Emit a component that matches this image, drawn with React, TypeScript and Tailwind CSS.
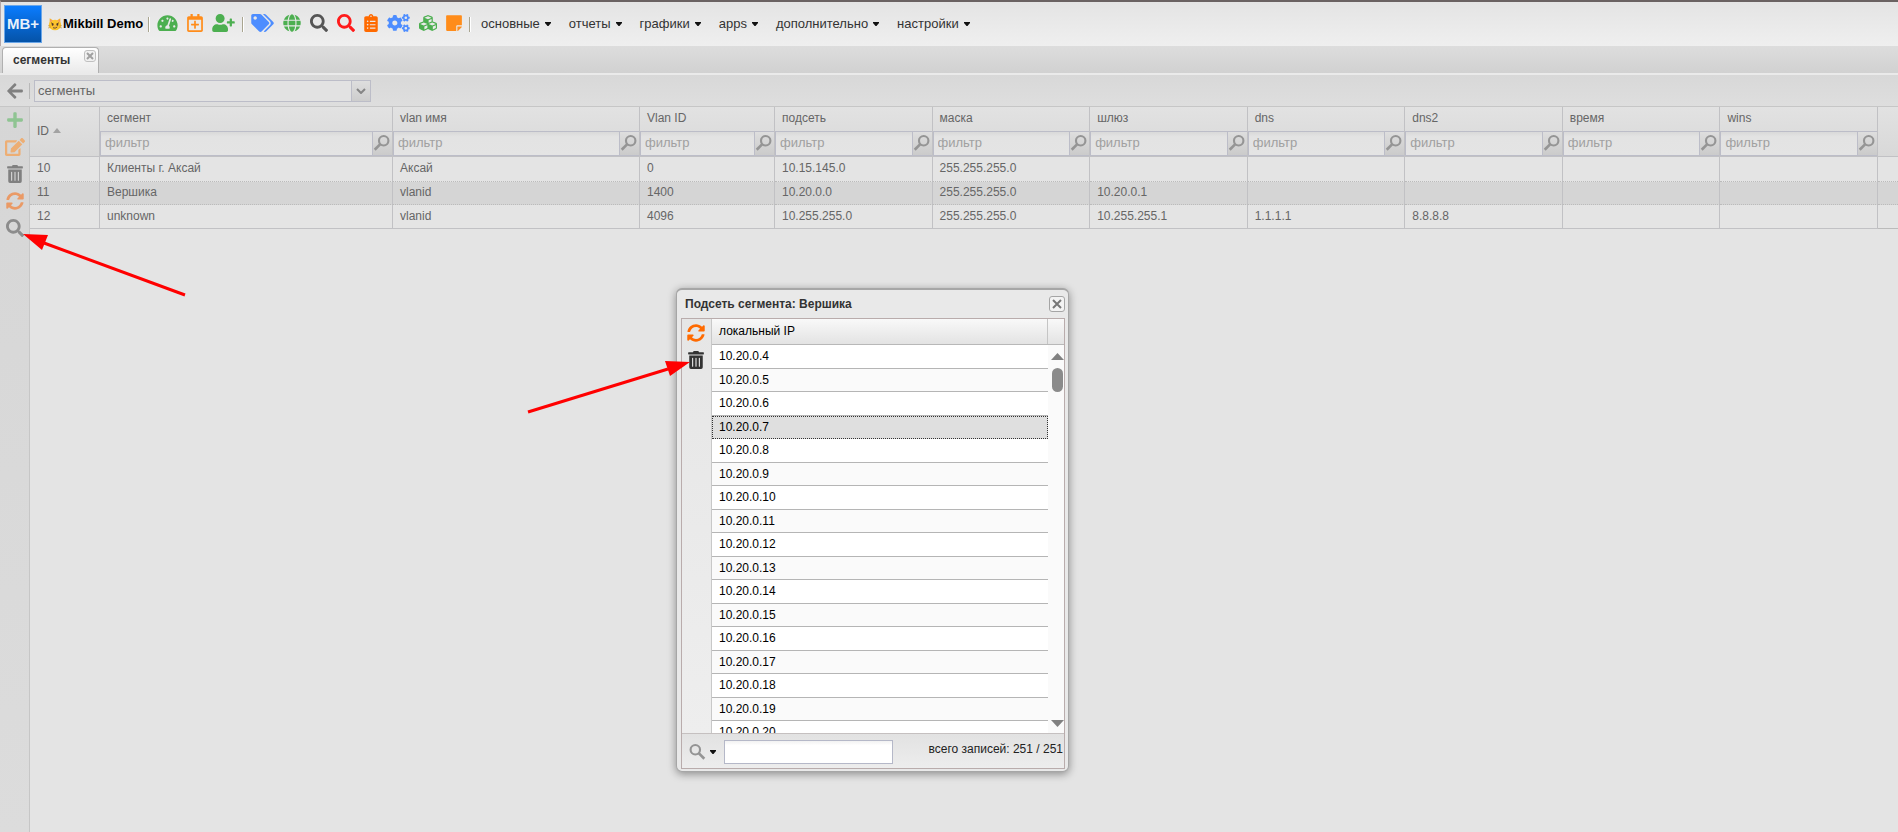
import { useState } from 'react';
import {
    FaTachometerAlt, FaRegCalendarPlus, FaUserPlus, FaTags, FaGlobe, FaSearch, FaClipboardList,
    FaCogs, FaCubes, FaStickyNote, FaArrowLeft, FaPlus, FaEdit, FaTrashAlt, FaSyncAlt,
} from 'react-icons/fa';
import type { IconType } from 'react-icons';

interface Tool {
    label: string;
    icon: IconType;
    className: string;
}

interface Column {
    key: string;
    title: string;
    width: string;
}

const toolGroups: Tool[][] = [
    [
        { label: 'панель', icon: FaTachometerAlt, className: 'w-[21px] text-[#4caf50]' },
        { label: 'календарь', icon: FaRegCalendarPlus, className: 'w-4 text-[#ff8c1a]' },
        { label: 'новый абонент', icon: FaUserPlus, className: 'w-[23px] text-[#4caf50]' },
    ],
    [
        { label: 'тарифы', icon: FaTags, className: 'w-[23px] text-[#4d8dff]' },
        { label: 'сеть', icon: FaGlobe, className: 'w-[18px] text-[#4caf50]' },
        { label: 'поиск', icon: FaSearch, className: 'w-[18px] text-[#555555]' },
        { label: 'расширенный поиск', icon: FaSearch, className: 'w-[18px] text-[#ff1a1a]' },
        { label: 'заявки', icon: FaClipboardList, className: 'w-3.5 text-[#ff6a00]' },
        { label: 'настройки', icon: FaCogs, className: 'w-[23px] text-[#4d8dff]' },
        { label: 'модули', icon: FaCubes, className: 'w-[18px] text-[#4caf50]' },
        { label: 'заметки', icon: FaStickyNote, className: 'w-4 text-[#ff8c1a]' },
    ],
];

const menus = ['основные', 'отчеты', 'графики', 'apps', 'дополнительно', 'настройки'];

const columns: Column[] = [
    { key: 'segment', title: 'сегмент', width: 'w-[293px]' },
    { key: 'vlan', title: 'vlan имя', width: 'w-[247px]' },
    { key: 'vlanId', title: 'Vlan ID', width: 'w-[135px]' },
    { key: 'subnet', title: 'подсеть', width: '' },
    { key: 'mask', title: 'маска', width: '' },
    { key: 'gateway', title: 'шлюз', width: '' },
    { key: 'dns', title: 'dns', width: '' },
    { key: 'dns2', title: 'dns2', width: '' },
    { key: 'time', title: 'время', width: '' },
    { key: 'wins', title: 'wins', width: '' },
];

const segments: Record<string, string>[] = [
    { id: '10', segment: 'Клиенты г. Аксай', vlan: 'Аксай', vlanId: '0', subnet: '10.15.145.0', mask: '255.255.255.0' },
    { id: '11', segment: 'Вершика', vlan: 'vlanid', vlanId: '1400', subnet: '10.20.0.0', mask: '255.255.255.0', gateway: '10.20.0.1' },
    { id: '12', segment: 'unknown', vlan: 'vlanid', vlanId: '4096', subnet: '10.255.255.0', mask: '255.255.255.0', gateway: '10.255.255.1', dns: '1.1.1.1', dns2: '8.8.8.8' },
];

const addresses = Array.from({ length: 17 }, (_, i) => `10.20.0.${i + 4}`);

const sideTools: Tool[] = [
    { label: 'добавить', icon: FaPlus, className: 'w-[18px] text-[#8fc492]' },
    { label: 'редактировать', icon: FaEdit, className: 'w-5 text-[#edae74]' },
    { label: 'удалить', icon: FaTrashAlt, className: 'w-[18px] text-[#808080]' },
    { label: 'обновить', icon: FaSyncAlt, className: 'w-[18px] text-[#ea9a66]' },
    { label: 'подсеть', icon: FaSearch, className: 'w-[18px] text-[#8c8c8c]' },
];

function Separator() {
    return <span className="h-[15px] w-[2px] shrink-0 border-l border-[#a9a590] bg-white" />;
}

function Caret() {
    return (
        <svg viewBox="0 0 6 4" className="h-1 w-1.5 fill-[#111111]" aria-hidden="true">
            <path d="M0 0h6v1L3.500 4h-1L0 1z" />
        </svg>
    );
}

function CatFace() {
    return (
        <svg viewBox="0 0 14 14" className="h-3.5 w-3.5 shrink-0" aria-hidden="true">
            <path d="M1.600 6.500 1.700 1.200 5.200 3.400zM12.400 6.500l-.1-5.300-3.500 2.200z" fill="#f9b428" />
            <ellipse cx="7" cy="8" rx="6.200" ry="5.300" fill="#fcc42c" />
            <path d="m2.400 2.600 1.800 1.200-1.700 1.500zM11.600 2.600 9.800 3.800l1.700 1.500z" fill="#f08a7a" />
            <path d="M3 5.800 5.600 7M11 5.800 8.400 7" stroke="#6d4c1f" strokeWidth=".9" />
            <ellipse cx="4.600" cy="7.700" rx=".9" ry="1.100" fill="#4e342e" />
            <ellipse cx="9.400" cy="7.700" rx=".9" ry="1.100" fill="#4e342e" />
            <path d="M6.300 8.800h1.400L7 9.700z" fill="#e57373" />
            <path d="M5 10.700q2.200 1.300 4.200-.7" fill="none" stroke="#5d4037" strokeWidth=".9" />
            <path d="M0 8.700l2.600.3M0 11l2.600-.7M14 8.700l-2.600.3M14 11l-2.600-.7" stroke="#b07d1a" strokeWidth=".5" />
        </svg>
    );
}

function TopBar() {
    return (
        <header className="flex h-[46px] shrink-0 items-center border-t-2 border-l border-t-[#6a6262] border-l-[#b5a8a8] bg-linear-to-b from-[#e4e4e4] to-[#efefef]">
            <div className="ml-[3px] flex h-[38px] w-[38px] shrink-0 items-center justify-center border border-[#6aa6e8] bg-linear-to-b from-[#0a7cff] to-[#0553a8] text-[15px] font-bold text-[#e8f1fb]">
                MB+
            </div>
            <div className="ml-1.5 flex w-[100px] shrink-0 items-center text-[13px] font-bold whitespace-nowrap text-black">
                <CatFace />
                <span className="ml-px">Mikbill Demo</span>
            </div>
            <Separator />
            {toolGroups.map((group, i) => (
                <div key={i} className="flex shrink-0 items-center">
                    <div className="flex items-center gap-[9px] px-[7px] pb-0.5">
                        {group.map(({ label, icon: Icon, className }) => (
                            <button key={label} type="button" aria-label={label} className={className}>
                                <Icon className="h-[18px] w-full" />
                            </button>
                        ))}
                    </div>
                    <Separator />
                </div>
            ))}
            <nav className="flex items-center gap-[18px] pl-2.5">
                {menus.map(name => (
                    <button key={name} type="button" className="flex items-center gap-[5px] text-[13px] text-[#333333]">
                        {name}
                        <Caret />
                    </button>
                ))}
            </nav>
        </header>
    );
}

function Lens({ className }: { className: string }) {
    return (
        <svg viewBox="0 0 16 16" className={className} fill="none" stroke="currentColor" aria-hidden="true">
            <circle cx="9.500" cy="6" r="4.200" strokeWidth="1.900" />
            <path d="M6.500 9 1.500 14" strokeWidth="2.400" />
        </svg>
    );
}

function FilterBox({ title }: { title: string }) {
    return (
        <div className="flex h-[25px] border border-r-0 border-[#bcbdc8] bg-linear-to-b from-[#d9d9d9] via-[#e3e3e3] via-20% to-[#e4e4e4]">
            <input
                type="text"
                aria-label={`фильтр: ${title}`}
                placeholder="фильтр"
                className="min-w-0 flex-1 px-1 pb-0.5 text-[13px] text-[#606060] outline-none placeholder:text-[#a0a0a0]"
            />
            <button type="button" aria-label={`искать: ${title}`} className="flex w-5 items-start border-l border-[#bcbdc8] bg-linear-to-b from-[#dedede] to-[#cbcbcb] pt-0.5 text-[#959595]">
                <Lens className="h-[18px] w-[18px]" />
            </button>
        </div>
    );
}

function SegmentsTable() {
    return (
        <table className="w-full table-fixed border-separate border-spacing-0 text-xs text-[#666666]">
            <colgroup>
                <col className="w-[70px]" />
                {columns.map(col => <col key={col.key} className={col.width} />)}
                <col className="w-5" />
            </colgroup>
            <thead className="bg-linear-to-b from-[#e2e2e2] to-[#d8d8d8]">
                <tr>
                    <th className="h-[50px] border-r border-b border-[#c1c1c4] px-[7px] pt-0 pb-0.5 text-left font-normal">
                        <span className="flex items-center gap-1">
                            ID
                            <svg viewBox="0 0 8 5" className="h-[5px] w-2 fill-[#a3a3a3]" aria-hidden="true"><path d="M4 0l4 5H0z" /></svg>
                        </span>
                    </th>
                    {columns.map(col => (
                        <th key={col.key} className="border-r border-b border-[#c1c1c4] p-0 text-left align-top font-normal">
                            <div className="h-6 px-[7px] leading-[22px]">{col.title}</div>
                            <FilterBox title={col.title} />
                        </th>
                    ))}
                    <td className="border-b border-[#c1c1c4]" />
                </tr>
            </thead>
            <tbody>
                {segments.map(row => (
                    <tr key={row.id} className="group even:bg-[#d5d5d5]">
                        <td className="h-6 border-r border-b border-dotted border-[#bbbbbb] border-r-[#c1c1c4] px-[7px] pt-0 pb-0.5 group-first:h-[25px] group-last:border-b-[#c1c1c4] group-last:border-solid group-even:h-[23px] [border-right-style:solid]">
                            {row.id}
                        </td>
                        {columns.map(col => (
                            <td key={col.key} className="border-r border-b border-dotted border-[#bbbbbb] border-r-[#c1c1c4] px-[7px] pt-0 pb-0.5 group-last:border-b-[#c1c1c4] group-last:border-solid [border-right-style:solid]">
                                {row[col.key]}
                            </td>
                        ))}
                        <td className="border-b border-dotted border-[#bbbbbb] group-last:border-solid" />
                    </tr>
                ))}
            </tbody>
        </table>
    );
}

function SubnetDialog() {
    const [selected, setSelected] = useState('10.20.0.7');
    const [query, setQuery] = useState('');

    return (
        <section
            role="dialog"
            aria-labelledby="subnet-title"
            className="absolute top-[288px] left-[676px] w-[393px] rounded-md border border-t-2 border-[#a6a6a6] bg-[#e9e9e9] pr-[3px] pb-0.5 pl-1 shadow-[0_2px_8px_rgba(0,0,0,0.4)]"
        >
            <div className="flex h-7 items-center justify-between pl-1">
                <h2 id="subnet-title" className="text-xs font-bold text-[#333333]">Подсеть сегмента: Вершика</h2>
                <button type="button" aria-label="закрыть" className="flex h-4 w-4 items-center justify-center rounded-[3px] border border-[#a5a5a5] bg-[#f3f3f3]">
                    <svg viewBox="0 0 10 10" className="h-2.5 w-2.5" stroke="#777777" strokeWidth="2" aria-hidden="true"><path d="M1 1l8 8M9 1L1 9" /></svg>
                </button>
            </div>
            <div className="border border-[#b9acac]">
                <div className="flex h-[414px]">
                    <div className="flex w-[30px] shrink-0 flex-col items-center gap-[9px] border-r border-[#c8c8c8] bg-linear-to-b from-[#e6e6e6] to-[#eeeeee] pt-[5px] pr-px text-lg">
                        <button type="button" aria-label="обновить список" className="text-[#ff6a00]"><FaSyncAlt /></button>
                        <button type="button" aria-label="удалить адрес" className="text-[#333333]"><FaTrashAlt /></button>
                    </div>
                    <div className="flex min-w-0 flex-1 flex-col bg-[#fafafa] text-xs text-black">
                        <div className="flex h-[26px] shrink-0 border-b border-[#b8b8b8] bg-linear-to-b from-[#f9f9f9] to-[#e3e3e3] leading-6">
                            <div id="ip-head" className="flex-1 border-r border-[#c5c5c5] px-[7px]">локальный IP</div>
                            <div className="w-4" />
                        </div>
                        <div className="flex min-h-0 flex-1 overflow-hidden">
                            <ul aria-labelledby="ip-head" className="flex-1">
                                {addresses.map(ip => (
                                    <li
                                        key={ip}
                                        onClick={() => setSelected(ip)}
                                        className={`h-6 even:h-[23px] ${ip === selected
                                            ? 'border border-dotted border-[#333333] bg-[#dfdfdf] px-1.5 leading-5'
                                            : 'border-b border-[#b5b5b5] px-[7px] leading-[22px] odd:bg-white even:bg-[#fafafa]'
                                            }`}
                                    >
                                        {ip}
                                    </li>
                                ))}
                            </ul>
                            <div className="flex w-4 flex-col items-center pt-2 pb-1.5 pl-[3px]">
                                <svg viewBox="0 0 13 7" className="h-[7px] w-[13px] fill-[#808080]" aria-hidden="true"><path d="M6.500 0L13 7H0z" /></svg>
                                <div className="mt-2 h-6 w-[11px] rounded-full bg-[#8b8b8b]" />
                                <svg viewBox="0 0 13 7" className="mt-auto h-[7px] w-[13px] fill-[#808080]" aria-hidden="true"><path d="M0 0h13L6.500 7z" /></svg>
                            </div>
                        </div>
                    </div>
                </div>
                <div className="flex h-[35px] items-center border-t border-[#c5c0c0] bg-linear-to-b from-[#e2e2e2] to-[#ededed] pt-0.5">
                    <button type="button" aria-label="режим поиска" className="flex w-[42px] items-center gap-1 pl-1.5 text-[#949494]">
                        <Lens className="h-[18px] w-[18px] -scale-x-100" />
                        <Caret />
                    </button>
                    <input
                        type="text"
                        aria-label="поиск"
                        value={query}
                        onChange={e => setQuery(e.target.value)}
                        className="h-6 w-[169px] border border-[#b5b8c8] bg-linear-to-b from-[#f2f2f2] to-white to-20% px-1 text-xs outline-none"
                    />
                    <span className="ml-auto pr-px pb-1.5 text-xs text-[#222222]">всего записей: 251 / 251</span>
                </div>
            </div>
        </section>
    );
}

function Arrows() {
    return (
        <svg className="pointer-events-none absolute top-0 left-0 h-[420px] w-[720px] fill-[#ff0000] stroke-[#ff0000]" viewBox="0 0 720 420" aria-hidden="true">
            <path d="M185 295L44 243" strokeWidth="3" />
            <path d="M23 234l25 1-6 15z" stroke="none" />
            <path d="M528 412L668 369" strokeWidth="3" />
            <path d="M690 362l-25-1 5 15z" stroke="none" />
        </svg>
    );
}

export default function App() {
    const [segment, setSegment] = useState('сегменты');

    return (
        <div className="relative flex min-h-screen flex-col overflow-hidden bg-[#e4e4e4] font-['Liberation_Sans',Arial,sans-serif]">
            <TopBar />
            <div className="flex h-[27px] shrink-0 items-end bg-linear-to-b from-[#dddddd] to-[#d1d1d1] pl-0.5">
                <div className="flex h-[26px] w-[97px] justify-between rounded-t border border-b-0 border-[#b0b0b0] bg-linear-to-b from-white to-[#eaeaea] pt-0.5 pr-0.5 pl-2.5">
                    <span className="text-xs leading-5 font-bold text-[#333333]">сегменты</span>
                    <button type="button" aria-label="закрыть вкладку" className="flex h-3 w-3 items-center justify-center rounded-[3px] border border-[#c0c0c0] bg-[#f0f0f0]">
                        <svg viewBox="0 0 8 8" className="h-2 w-2" stroke="#a0a0a0" strokeWidth="2" aria-hidden="true"><path d="M1 1l6 6M7 1L1 7" /></svg>
                    </button>
                </div>
            </div>
            <div className="flex h-[34px] shrink-0 items-center border-t-2 border-b border-t-[#eaeaea] border-b-[#c6c6c6] bg-linear-to-b from-[#d8d8d8] to-[#dedede]">
                <button type="button" aria-label="назад" className="flex w-[29px] justify-center text-lg text-[#808080]"><FaArrowLeft /></button>
                <span className="h-4 w-[5px] border-l border-[#b8b8b8]" />
                <div className="flex h-[22px] w-[337px] border border-[#bcbdc8] bg-[#e2e2e2]">
                    <input
                        type="text"
                        aria-label="раздел"
                        value={segment}
                        onChange={e => setSegment(e.target.value)}
                        className="min-w-0 flex-1 px-[3px] text-[13px] text-[#666666] outline-none"
                    />
                    <button type="button" aria-label="открыть список" className="flex w-[19px] items-center justify-center border-l border-[#bcbdc8] bg-linear-to-b from-[#dedede] to-[#cdcdcd]">
                        <svg viewBox="0 0 10 6" className="h-1.5 w-2.5" fill="none" stroke="#858585" strokeWidth="2" aria-hidden="true"><path d="M1 1l4 4 4-4" /></svg>
                    </button>
                </div>
            </div>
            <main className="flex flex-1">
                <div className="flex w-[30px] shrink-0 flex-col items-center gap-[9px] border-r border-[#c6c6c6] bg-linear-to-b from-[#d6d6d6] to-[#dcdcdc] pt-1">
                    {sideTools.map(({ label, icon: Icon, className }) => (
                        <button key={label} type="button" aria-label={label} className={className}>
                            <Icon className="h-[18px] w-full" />
                        </button>
                    ))}
                </div>
                <div className="min-w-0 flex-1">
                    <SegmentsTable />
                </div>
            </main>
            <SubnetDialog />
            <Arrows />
        </div>
    );
}
